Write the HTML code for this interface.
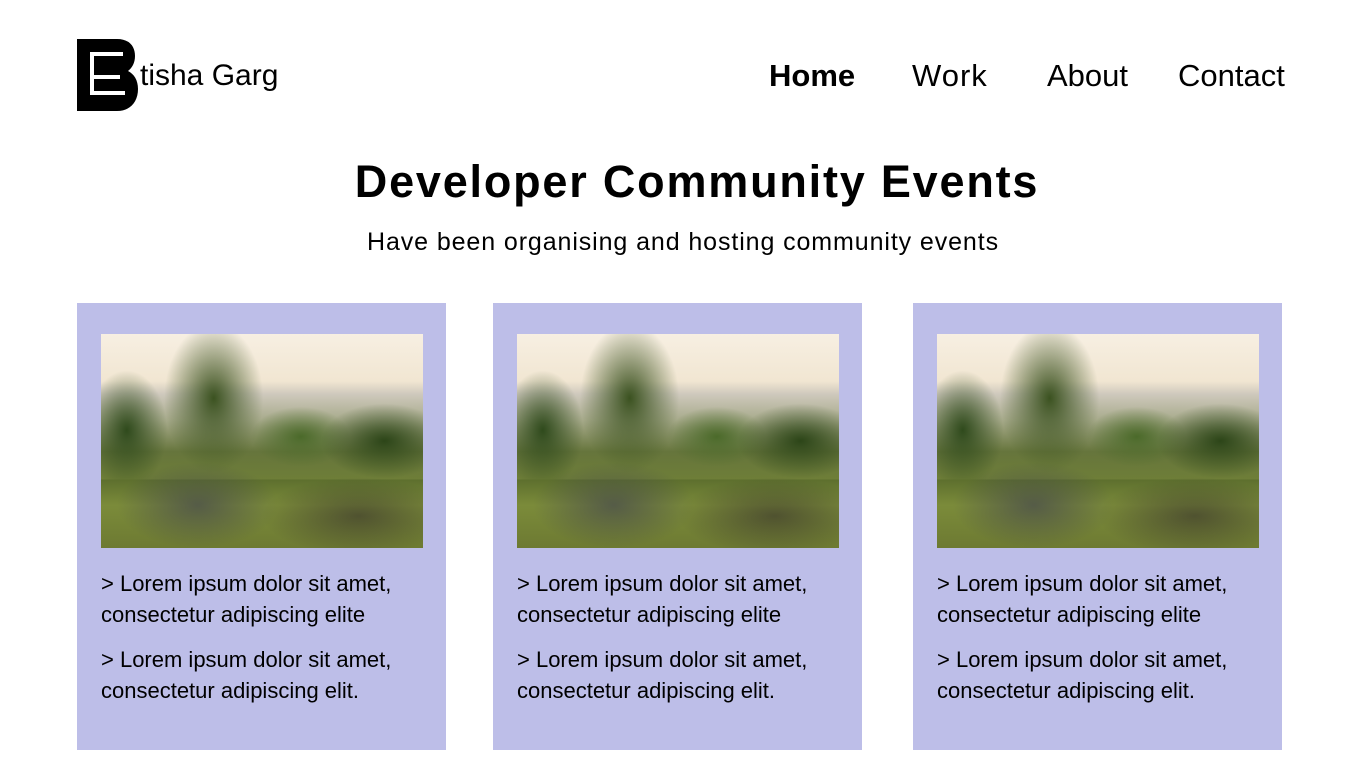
<!DOCTYPE html>
<html><head><meta charset="utf-8"><style>
body{margin:0;width:1366px;height:768px;background:#fff;font-family:"Liberation Sans",sans-serif;position:relative;overflow:hidden;color:#000}
.abs{position:absolute}
.nav{font-size:31px;top:58px}
h1{position:absolute;top:156px;left:0;width:1394px;text-align:center;margin:0;font-size:45px;font-weight:bold;letter-spacing:1.8px}
.sub{top:228px;left:0;width:1366px;text-align:center;font-size:25px;letter-spacing:0.9px}
.card{position:absolute;top:303px;width:369px;height:447px;background:#bdbee8}
.photo{position:absolute;left:24px;top:31px;width:322px;height:214px;overflow:hidden;
background:
radial-gradient(ellipse 30% 18% at 80% 85%,rgba(40,30,40,.5),transparent),
radial-gradient(ellipse 25% 20% at 30% 80%,rgba(60,60,80,.6),transparent),
linear-gradient(180deg,transparent 0,transparent 68%,#5d6f2e 68%,#7b8b3a 80%,#6d7a32 100%),
radial-gradient(ellipse 18% 40% at 8% 45%,#2f4a1c,transparent 70%),
radial-gradient(ellipse 22% 50% at 35% 30%,#3b5220,transparent 70%),
radial-gradient(ellipse 28% 25% at 88% 50%,#2c4518,transparent 70%),
radial-gradient(ellipse 22% 20% at 62% 48%,#4b6a2a,transparent 70%),
linear-gradient(180deg,#f7efe2 0,#f1e6d2 22%,#cfc9bd 28%,#a8ab8c 40%,#66753c 55%,#6e7e38 68%)}
.txt{position:absolute;left:24px;top:265px;font-size:22px;line-height:31px;width:345px}
.txt p{margin:0 0 14px}
</style></head><body>
<svg class="abs" style="left:77px;top:39px" width="62" height="72" viewBox="0 0 62 72">
<path d="M0 0H40C52 0 58 7 58 17C58 24 55 29 51 32C57 35 61 41 61 50C61 63 53 72 40 72H0Z" fill="#000"/>
<path d="M46 15H15V54H48M15 38H43" fill="none" stroke="#fff" stroke-width="4"/>
</svg>
<div class="abs" style="left:140px;top:59px;font-size:30px">tisha Garg</div>
<div class="abs nav" style="left:769px;font-weight:bold">Home</div>
<div class="abs nav" style="left:912px;letter-spacing:1px">Work</div>
<div class="abs nav" style="left:1047px">About</div>
<div class="abs nav" style="left:1178px">Contact</div>
<h1>Developer Community Events</h1>
<div class="abs sub">Have been organising and hosting community events</div>
<div class="card" style="left:77px"><div class="photo"></div><div class="txt"><p>&gt; Lorem ipsum dolor sit amet, consectetur adipiscing elite</p><p>&gt; Lorem ipsum dolor sit amet, consectetur adipiscing elit.</p></div></div>
<div class="card" style="left:493px"><div class="photo"></div><div class="txt"><p>&gt; Lorem ipsum dolor sit amet, consectetur adipiscing elite</p><p>&gt; Lorem ipsum dolor sit amet, consectetur adipiscing elit.</p></div></div>
<div class="card" style="left:913px"><div class="photo"></div><div class="txt"><p>&gt; Lorem ipsum dolor sit amet, consectetur adipiscing elite</p><p>&gt; Lorem ipsum dolor sit amet, consectetur adipiscing elit.</p></div></div>
</body></html>
